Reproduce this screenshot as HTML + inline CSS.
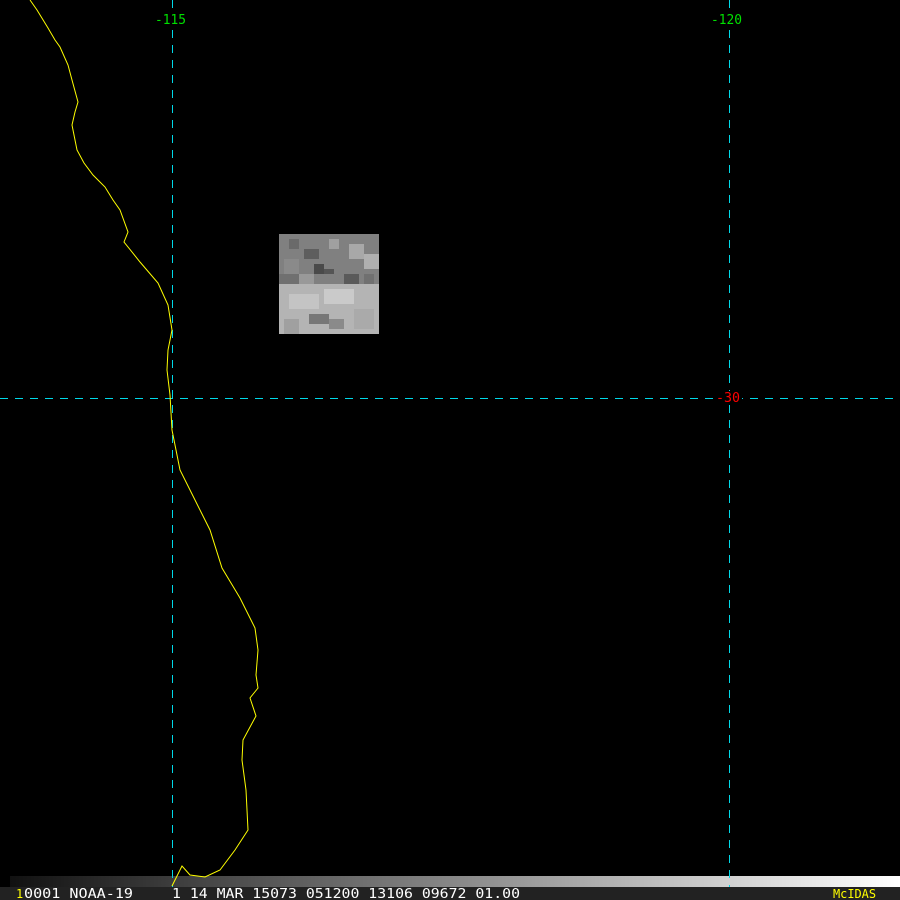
<!DOCTYPE html>
<html><head><meta charset="utf-8"><style>
html,body{margin:0;padding:0;background:#000;width:900px;height:900px;overflow:hidden}
svg{display:block}
text{font-family:"DejaVu Sans Mono","Liberation Mono",monospace}
</style></head><body>
<svg width="900" height="900" viewBox="0 0 900 900" xmlns="http://www.w3.org/2000/svg">
<defs>
<linearGradient id="g" x1="0" x2="1" y1="0" y2="0">
<stop offset="0" stop-color="#111"/><stop offset="1" stop-color="#fff"/>
</linearGradient>
</defs>
<rect width="900" height="900" fill="#000"/>
<g id="img" shape-rendering="crispEdges">
<rect x="279" y="234" width="100" height="100" fill="#9a9a9a"/>
<rect x="279" y="234" width="100" height="50" fill="#808080"/>
<rect x="279" y="284" width="100" height="50" fill="#b4b4b4"/>
<rect x="289" y="239" width="10" height="10" fill="#6a6a6a"/>
<rect x="304" y="249" width="15" height="10" fill="#5e5e5e"/>
<rect x="329" y="239" width="10" height="10" fill="#a0a0a0"/>
<rect x="349" y="244" width="15" height="15" fill="#a8a8a8"/>
<rect x="364" y="254" width="15" height="15" fill="#b0b0b0"/>
<rect x="314" y="264" width="10" height="10" fill="#4a4a4a"/>
<rect x="324" y="269" width="10" height="5" fill="#555"/>
<rect x="344" y="274" width="15" height="10" fill="#5a5a5a"/>
<rect x="284" y="259" width="15" height="15" fill="#8a8a8a"/>
<rect x="279" y="274" width="20" height="10" fill="#707070"/>
<rect x="299" y="274" width="15" height="10" fill="#999"/>
<rect x="364" y="274" width="10" height="10" fill="#707070"/>
<rect x="289" y="294" width="30" height="15" fill="#c4c4c4"/>
<rect x="324" y="289" width="30" height="15" fill="#cacaca"/>
<rect x="309" y="314" width="20" height="10" fill="#777"/>
<rect x="329" y="319" width="15" height="10" fill="#8a8a8a"/>
<rect x="284" y="319" width="15" height="15" fill="#a0a0a0"/>
<rect x="354" y="309" width="20" height="20" fill="#aaa"/>
</g>
<rect x="10" y="876" width="890" height="11" fill="url(#g)"/>
<rect x="0" y="887" width="900" height="13" fill="#222"/>
<g stroke="#00d8e8" stroke-width="1" stroke-dasharray="8,7" shape-rendering="crispEdges">
<line x1="172.5" y1="0" x2="172.5" y2="887"/>
<line x1="729.5" y1="0" x2="729.5" y2="887"/>
<line x1="0" y1="398.5" x2="900" y2="398.5"/>
</g>
<polyline fill="none" stroke="#ffff00" stroke-width="1" points="30,0 37,10 48,28 55,40 60,47 68,65 72,80 78,102 75,112 72,125 77,150 84,163 93,175 105,187 113,200 120,210 128,232 124,242 140,262 158,283 168,305 172,330 168,350 167,370 170,395 172,430 180,470 195,500 210,530 222,568 240,598 255,628 258,650 256,675 258,688 250,698 256,716 243,740 242,760 246,790 248,830 235,850 220,870 205,877 190,875 182,866 172,886"/>
<rect x="153" y="12" width="35" height="14" fill="#000"/>
<rect x="709" y="12" width="35" height="14" fill="#000"/>
<text x="155" y="24" fill="#00e000" font-size="13" textLength="31" lengthAdjust="spacingAndGlyphs">-115</text>
<text x="711" y="24" fill="#00e000" font-size="13" textLength="31" lengthAdjust="spacingAndGlyphs">-120</text>
<rect x="714" y="391" width="28" height="14" fill="#000"/>
<text x="716" y="402" fill="#ff0000" font-size="13" textLength="24" lengthAdjust="spacingAndGlyphs">-30</text>
<text x="16" y="898" fill="#ffff00" font-size="12">1</text>
<text x="24" y="898" fill="#fff" font-size="13" textLength="109" lengthAdjust="spacingAndGlyphs">0001 NOAA-19</text>
<text x="172" y="898" fill="#fff" font-size="13" textLength="348" lengthAdjust="spacingAndGlyphs">1 14 MAR 15073 051200 13106 09672 01.00</text>
<text x="833" y="898" fill="#ffff00" font-size="12" textLength="43" lengthAdjust="spacingAndGlyphs">McIDAS</text>
</svg>
</body></html>
